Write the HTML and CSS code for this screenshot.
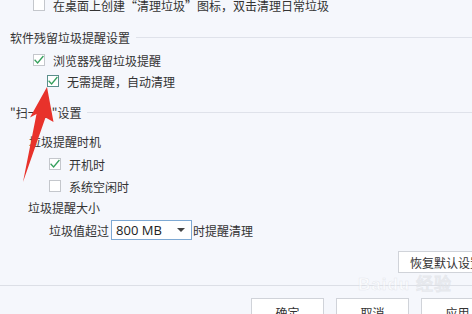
FILE: index.html
```html
<!DOCTYPE html>
<html lang="zh-CN">
<head>
<meta charset="utf-8">
<link rel="stylesheet" href="styles.css">
</head>
<body>
<div class="panel">
  <div class="row r-top indent1">
    <span class="cb"></span><span class="label">在桌面上创建“清理垃圾”图标，双击清理日常垃圾</span>
  </div>
  <div class="heading h1"><span>软件残留垃圾提醒设置</span></div>
  <div class="row r-browser indent1">
    <span class="cb checked"><svg viewBox="0 0 12 12"><path d="M1.6 5.8 L4.6 9 L10.4 2" /></svg></span><span class="label">浏览器残留垃圾提醒</span>
  </div>
  <div class="row r-auto indent2">
    <span class="cb checked focus"><svg viewBox="0 0 12 12"><path d="M1.6 5.8 L4.6 9 L10.4 2" /></svg></span><span class="label">无需提醒，自动清理</span>
  </div>
  <div class="heading h2"><span>"扫一扫"设置</span></div>
  <div class="row r-sub1 sub">垃圾提醒时机</div>
  <div class="row r-boot indent3">
    <span class="cb checked"><svg viewBox="0 0 12 12"><path d="M1.6 5.8 L4.6 9 L10.4 2" /></svg></span><span class="label">开机时</span>
  </div>
  <div class="row r-idle indent3">
    <span class="cb"></span><span class="label">系统空闲时</span>
  </div>
  <div class="row r-sub2 sub2">垃圾提醒大小</div>
  <div class="row r-size indent4">
    <span>垃圾值超过</span>
    <span class="select"><span class="val">800 MB</span><span class="caret"></span></span>
    <span>时提醒清理</span>
  </div>
  <div class="restore-row"><span class="btn restore">恢复默认设置</span></div>
</div>
<div class="footer">
  <span class="btn">确定</span>
  <span class="btn">取消</span>
  <span class="btn">应用</span>
</div>
<div class="watermark">Bai<span class="paw">du</span> 经验</div>
<svg class="arrow" viewBox="0 0 472 314" width="472" height="314">
  <polygon points="47,87 53.5,122 45.5,117.5 23,182 36.5,114 30,117.5" fill="#e8322b"/>
</svg>
</body>
</html>
```

FILE: styles.css
```css
html, body {
  margin: 0;
  padding: 0;
  width: 472px;
  height: 314px;
  overflow: hidden;
}
body {
  background: #f5f7fc;
  font-family: "Noto Sans CJK SC", "Noto Sans", sans-serif;
  font-size: 12px;
  color: #333;
  position: relative;
}
.panel {
  display: flex;
  flex-direction: column;
  margin-top: -5px;
}
.row {
  display: flex;
  align-items: center;
  height: 20px;
  white-space: nowrap;
}
.indent1 { padding-left: 33px; }
.indent2 { padding-left: 47px; }
.indent3 { padding-left: 49px; }
.indent4 { padding-left: 49px; }
.sub { padding-left: 29px; }
.sub2 { padding-left: 28px; }

.cb {
  box-sizing: border-box;
  width: 12px;
  height: 12px;
  border: 1px solid #c4c7cc;
  background: #fff;
  flex: none;
  position: relative;
}
.cb.focus { border-color: #5b8f8c; }
.cb svg {
  position: absolute;
  left: -1px;
  top: -1px;
  width: 12px;
  height: 12px;
  overflow: visible;
}
.cb svg path {
  fill: none;
  stroke: #36a05d;
  stroke-width: 1.3;
}
.label { margin-left: 8px; }

.heading {
  display: flex;
  align-items: center;
  height: 20px;
  padding-left: 10px;
  white-space: nowrap;
}
.heading::after {
  content: "";
  flex: 1;
  height: 1px;
  background: #dfe2ea;
  margin-left: 6px;
}

.r-top { margin-top: 0; }
.h1 { margin-top: 12px; }
.r-browser { margin-top: 3px; }
.r-auto { margin-top: 1px; }
.h2 { margin-top: 11px; }
.r-sub1 { margin-top: 9px; }
.r-boot { margin-top: 3px; }
.r-idle { margin-top: 2px; }
.r-sub2 { margin-top: 1px; }
.r-size { margin-top: 3px; }

.select {
  box-sizing: border-box;
  width: 81px;
  height: 20px;
  margin: 0 1px 0 2px;
  border: 1px solid #7ea9d3;
  background: #fff;
  display: flex;
  align-items: center;
  justify-content: space-between;
  padding: 0 6px 0 4px;
  font-family: "Open Sans", "Noto Sans", sans-serif;
  font-size: 13px;
  color: #222;
}
.caret {
  width: 0;
  height: 0;
  border-left: 4px solid transparent;
  border-right: 4px solid transparent;
  border-top: 4px solid #444;
}

.restore-row {
  display: flex;
  margin-top: 11px;
  padding-left: 398px;
  height: 22px;
}
.btn {
  box-sizing: border-box;
  display: flex;
  align-items: center;
  justify-content: center;
  background: #fff;
  border: 1px solid #d0d3d9;
  flex: none;
  white-space: nowrap;
  color: #333;
}
.restore {
  width: 96px;
  height: 22px;
  justify-content: flex-start;
  padding-left: 11px;
}

.footer {
  margin-top: 12px;
  border-top: 1px solid #dcdfe6;
  padding: 12px 0 0 251px;
  display: flex;
  gap: 12px;
}
.footer .btn {
  width: 73px;
  height: 26px;
  padding-top: 2px;
}

.watermark {
  position: absolute;
  left: 358px;
  top: 270px;
  font-family: "Liberation Sans", sans-serif;
  font-size: 17px;
  font-weight: bold;
  color: rgba(255, 255, 255, 0.5);
  -webkit-text-stroke: 0.5px rgba(200, 204, 212, 0.4);
  letter-spacing: 1px;
  white-space: nowrap;
  pointer-events: none;
}
.arrow {
  position: absolute;
  left: 0;
  top: 0;
  pointer-events: none;
}
```
